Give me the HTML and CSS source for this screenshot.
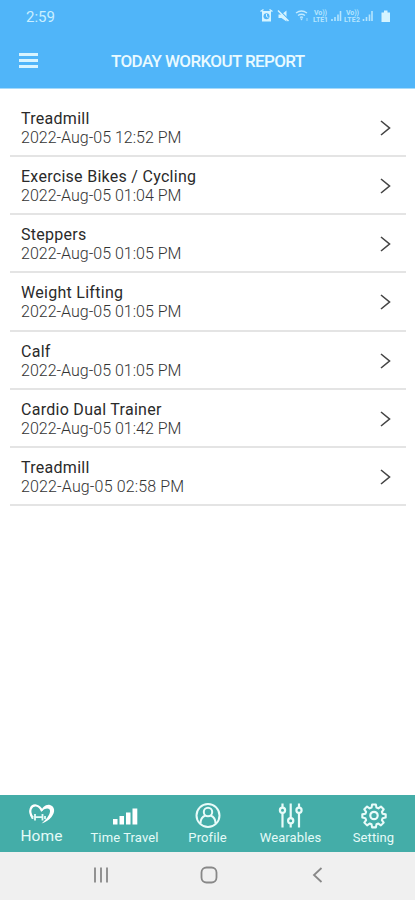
FILE: index.html
```
<!DOCTYPE html>
<html lang="en">
<head>
  <meta charset="UTF-8">
  <meta name="viewport" content="width=device-width, initial-scale=1.0">
  <title>Today Workout Report</title>
  <link rel="stylesheet" href="styles.css">
</head>
<body>
  <div class="app">
    <header class="header">
      <div class="status">
        <span class="time">2:59</span>
        <svg class="status-icons" width="134" height="16" viewBox="0 0 134 16">
          <!-- alarm -->
          <path d="M1.500 3.500l3-2M13.500 3.500l-3-2" stroke="#d5f4ff" stroke-width="1.500"/>
          <path d="M3 3h9v10.500H3z" fill="#d5f4ff"/>
          <circle cx="7.500" cy="8.300" r="3" fill="#50b5f9"/>
          <path d="M7.500 6v2.500l1.800 1" fill="none" stroke="#d5f4ff"/>
          <!-- mute -->
          <path d="M19.500 6.500h3l5-4v11l-5-3.500h-3z" fill="#d5f4ff"/>
          <path d="M20 2l10 10" stroke="#50b5f9" stroke-width="1.200"/>
          <path d="M19 2.500l10.500 10.500" stroke="#d5f4ff" stroke-width="1.500"/>
          <!-- wifi -->
          <path d="M37 5q5.500-4 11 0M39 7.500q3.500-2.500 7 0M41 9.500q1.500-1 3 0" fill="none" stroke="#c2eaff" stroke-width="1.300"/>
          <path d="M42.500 12.500l-1.500-2h3z" fill="#c2eaff"/>
          <path d="M48 10v3" stroke="#9bdafe"/>
          <!-- sim 1 -->
          <text class="volte" x="55" y="7" textLength="13">Vo))</text>
          <text class="volte" x="54" y="14" textLength="15">LTE1</text>
          <path d="M73 13v-2M76 13v-4M79 13V6.500M81.500 13V3" stroke="#b5e5fe" stroke-width="1.600"/>
          <!-- sim 2 -->
          <text class="volte" x="87" y="7" textLength="13">Vo))</text>
          <text class="volte" x="85" y="14" textLength="16">LTE2</text>
          <path d="M104.500 13v-2M107.500 13v-4M110.500 13V6.500M113 13V3" stroke="#b5e5fe" stroke-width="1.600"/>
          <!-- battery -->
          <path d="M122.500 4.500h2.500V2.500h3.500v2h2.500v9.500h-8.500z" fill="#d5f4ff"/>
        </svg>
      </div>
      <div class="title-bar">
        <a href="#" class="menu"><i></i><i></i><i></i></a>
        <h1>TODAY WORKOUT REPORT</h1>
      </div>
    </header>

    <ul class="list">
      <li>
        <div><p class="name">Treadmill</p><p class="date">2022-Aug-05 12:52 PM</p></div>
        <svg class="arrow" viewBox="0 0 12 18"><path d="M2 2l8.500 7-8.500 7"/></svg>
      </li>
      <li>
        <div><p class="name">Exercise Bikes / Cycling</p><p class="date">2022-Aug-05 01:04 PM</p></div>
        <svg class="arrow" viewBox="0 0 12 18"><path d="M2 2l8.500 7-8.500 7"/></svg>
      </li>
      <li>
        <div><p class="name">Steppers</p><p class="date">2022-Aug-05 01:05 PM</p></div>
        <svg class="arrow" viewBox="0 0 12 18"><path d="M2 2l8.500 7-8.500 7"/></svg>
      </li>
      <li>
        <div><p class="name">Weight Lifting</p><p class="date">2022-Aug-05 01:05 PM</p></div>
        <svg class="arrow" viewBox="0 0 12 18"><path d="M2 2l8.500 7-8.500 7"/></svg>
      </li>
      <li>
        <div><p class="name">Calf</p><p class="date">2022-Aug-05 01:05 PM</p></div>
        <svg class="arrow" viewBox="0 0 12 18"><path d="M2 2l8.500 7-8.500 7"/></svg>
      </li>
      <li>
        <div><p class="name">Cardio Dual Trainer</p><p class="date">2022-Aug-05 01:42 PM</p></div>
        <svg class="arrow" viewBox="0 0 12 18"><path d="M2 2l8.500 7-8.500 7"/></svg>
      </li>
      <li>
        <div><p class="name">Treadmill</p><p class="date wide">2022-Aug-05 02:58 PM</p></div>
        <svg class="arrow" viewBox="0 0 12 18"><path d="M2 2l8.500 7-8.500 7"/></svg>
      </li>
    </ul>

    <nav class="tabs">
      <a href="#" class="active">
        <svg viewBox="0 0 28 28">
          <path d="M4.500 15.500C0 9 3 3 8 3.500c3 .5 5 3 6 5.500" fill="none" stroke="#fff" stroke-width="2.200"/>
          <path d="M13 10c1-5 5-8 9-7 5 1.500 5.500 7 1.500 12-2.500 3-6.500 5.500-10 6.500 4-3.500 8-7.500 8.500-12C22.500 5.500 17 5.500 13 10z" fill="#fff"/>
          <path d="M4.500 14v3M7 12v6.500M7 15.200h7.500M14.500 12v6.500M17 14v3" stroke="#e5fbf8" stroke-width="1.800"/>
        </svg>
        <span>Home</span>
      </a>
      <a href="#">
        <svg viewBox="0 0 28 28"><path d="M2 17h4.500v5.500H2zM8.500 14h4.500v8.500H8.500zM15 10.500h4.500v12H15zM21.500 6.500h4.800v16h-4.800z" fill="#fff"/></svg>
        <span>Time Travel</span>
      </a>
      <a href="#">
        <svg viewBox="0 0 28 28" fill="none" stroke="#e9fbf9" stroke-width="2">
          <circle cx="14" cy="13.500" r="11.500"/>
          <circle cx="14" cy="10" r="4.200"/>
          <path d="M6.500 21.500c0-4.500 2-7 5-8M21.500 21.500c0-4.500-2-7-5-8"/>
        </svg>
        <span>Profile</span>
      </a>
      <a href="#">
        <svg viewBox="0 0 28 28" fill="none" stroke="#e9fbf9" stroke-width="2.200">
          <path d="M5.500 1.500v4M5.500 11v14.500M13.700 1.500v14.500M13.700 21.500v4M22 1.500v4M22 11v14.500"/>
          <circle cx="5.500" cy="8.300" r="2.600"/><circle cx="13.700" cy="18.700" r="2.600"/><circle cx="22" cy="8.300" r="2.600"/>
        </svg>
        <span>Wearables</span>
      </a>
      <a href="#">
        <svg viewBox="0 0 28 28" fill="none" stroke="#e9fbf9" stroke-width="2.200" stroke-linejoin="round">
          <path transform="translate(.7 .2) scale(.95)" d="M12 2.500h4l.6 3.200 2 .8 2.700-1.900 2.900 2.900-1.900 2.700.8 2 3.200.6v3.400l-3.200.6-.8 2 1.900 2.700-2.900 2.900-2.700-1.900-2 .8-.6 3.200h-4l-.6-3.200-2-.8-2.700 1.900-2.900-2.900 1.900-2.700-.8-2-3.200-.6v-3.400l3.200-.6.8-2-1.900-2.700 2.900-2.900 2.700 1.900 2-.8z"/>
          <circle cx="14" cy="13.500" r="3.700"/>
        </svg>
        <span>Setting</span>
      </a>
    </nav>

    <div class="system-nav">
      <svg viewBox="0 0 20 20"><path d="M4 2.500v15M10 2.500v15M16 2.500v15"/></svg>
      <svg viewBox="0 0 20 20"><rect x="2.500" y="2.500" width="15" height="15" rx="5"/></svg>
      <svg viewBox="0 0 20 20"><path d="M14.500 3L7 10l7.500 7"/></svg>
    </div>
  </div>
</body>
</html>
```
FILE: styles.css
```
* {
  margin: 0;
  padding: 0;
  box-sizing: border-box;
}
body {
  font-family: Roboto, "Liberation Sans", sans-serif;
  background: #fff;
}
a {
  text-decoration: none;
}
svg {
  display: block;
}
.app {
  display: flex;
  flex-direction: column;
  width: 415px;
  height: 900px;
}
.header {
  height: 89px;
  background: #50b5f9;
  border-bottom: 1px solid #a5dafb;
}
.status {
  display: flex;
  justify-content: space-between;
  height: 32px;
  padding: 8px 22px 0 26px;
}
.time {
  font-size: 15px;
  line-height: 18px;
  color: #c9efff;
}
.volte {
  font-size: 7px;
  font-weight: bold;
  fill: #b5e5fe;
}
.title-bar {
  display: flex;
  align-items: center;
  height: 57px;
  padding-left: 19px;
}
.menu {
  display: flex;
  flex-direction: column;
  gap: 3px;
  width: 19px;
  margin-right: 73px;
}
.menu i {
  height: 3px;
  background: #d8f4ff;
}
.title-bar h1 {
  font-size: 17px;
  font-weight: 500;
  letter-spacing: -.62px;
  white-space: nowrap;
  color: #e9faff;
}
.list {
  flex: 1;
  padding: 10px 9px 0 10px;
  list-style: none;
}
.list li {
  display: flex;
  justify-content: space-between;
  height: 58.150px;
  padding: 10px 15px 0 11px;
  border-bottom: 2px solid #e4e4e4;
}
.name {
  font-size: 16px;
  line-height: 19px;
  letter-spacing: .28px;
  color: #2a2a2a;
}
.date {
  font-size: 16px;
  font-weight: 300;
  line-height: 20px;
  color: #333;
}
.date.wide {
  letter-spacing: .15px;
}
.arrow {
  width: 12px;
  height: 18px;
  margin-top: 10px;
  fill: none;
  stroke: #444;
  stroke-width: 1.600;
}
.tabs {
  display: grid;
  grid-template-columns: repeat(5, 83px);
  height: 57px;
  background: #44ada8;
}
.tabs a {
  display: flex;
  flex-direction: column;
  align-items: center;
  padding-top: 7px;
  font-size: 13px;
  line-height: 15px;
  letter-spacing: .1px;
  color: #e5fbf8;
}
.tabs svg {
  width: 28px;
  height: 28px;
}
.tabs .active {
  font-size: 15.500px;
  line-height: 13px;
}
.system-nav {
  display: flex;
  justify-content: space-between;
  height: 48px;
  padding: 13px 88px 0 91px;
  background: #f0f0f0;
}
.system-nav svg {
  width: 20px;
  height: 20px;
  fill: none;
  stroke: #888;
  stroke-width: 1.800;
}
```
